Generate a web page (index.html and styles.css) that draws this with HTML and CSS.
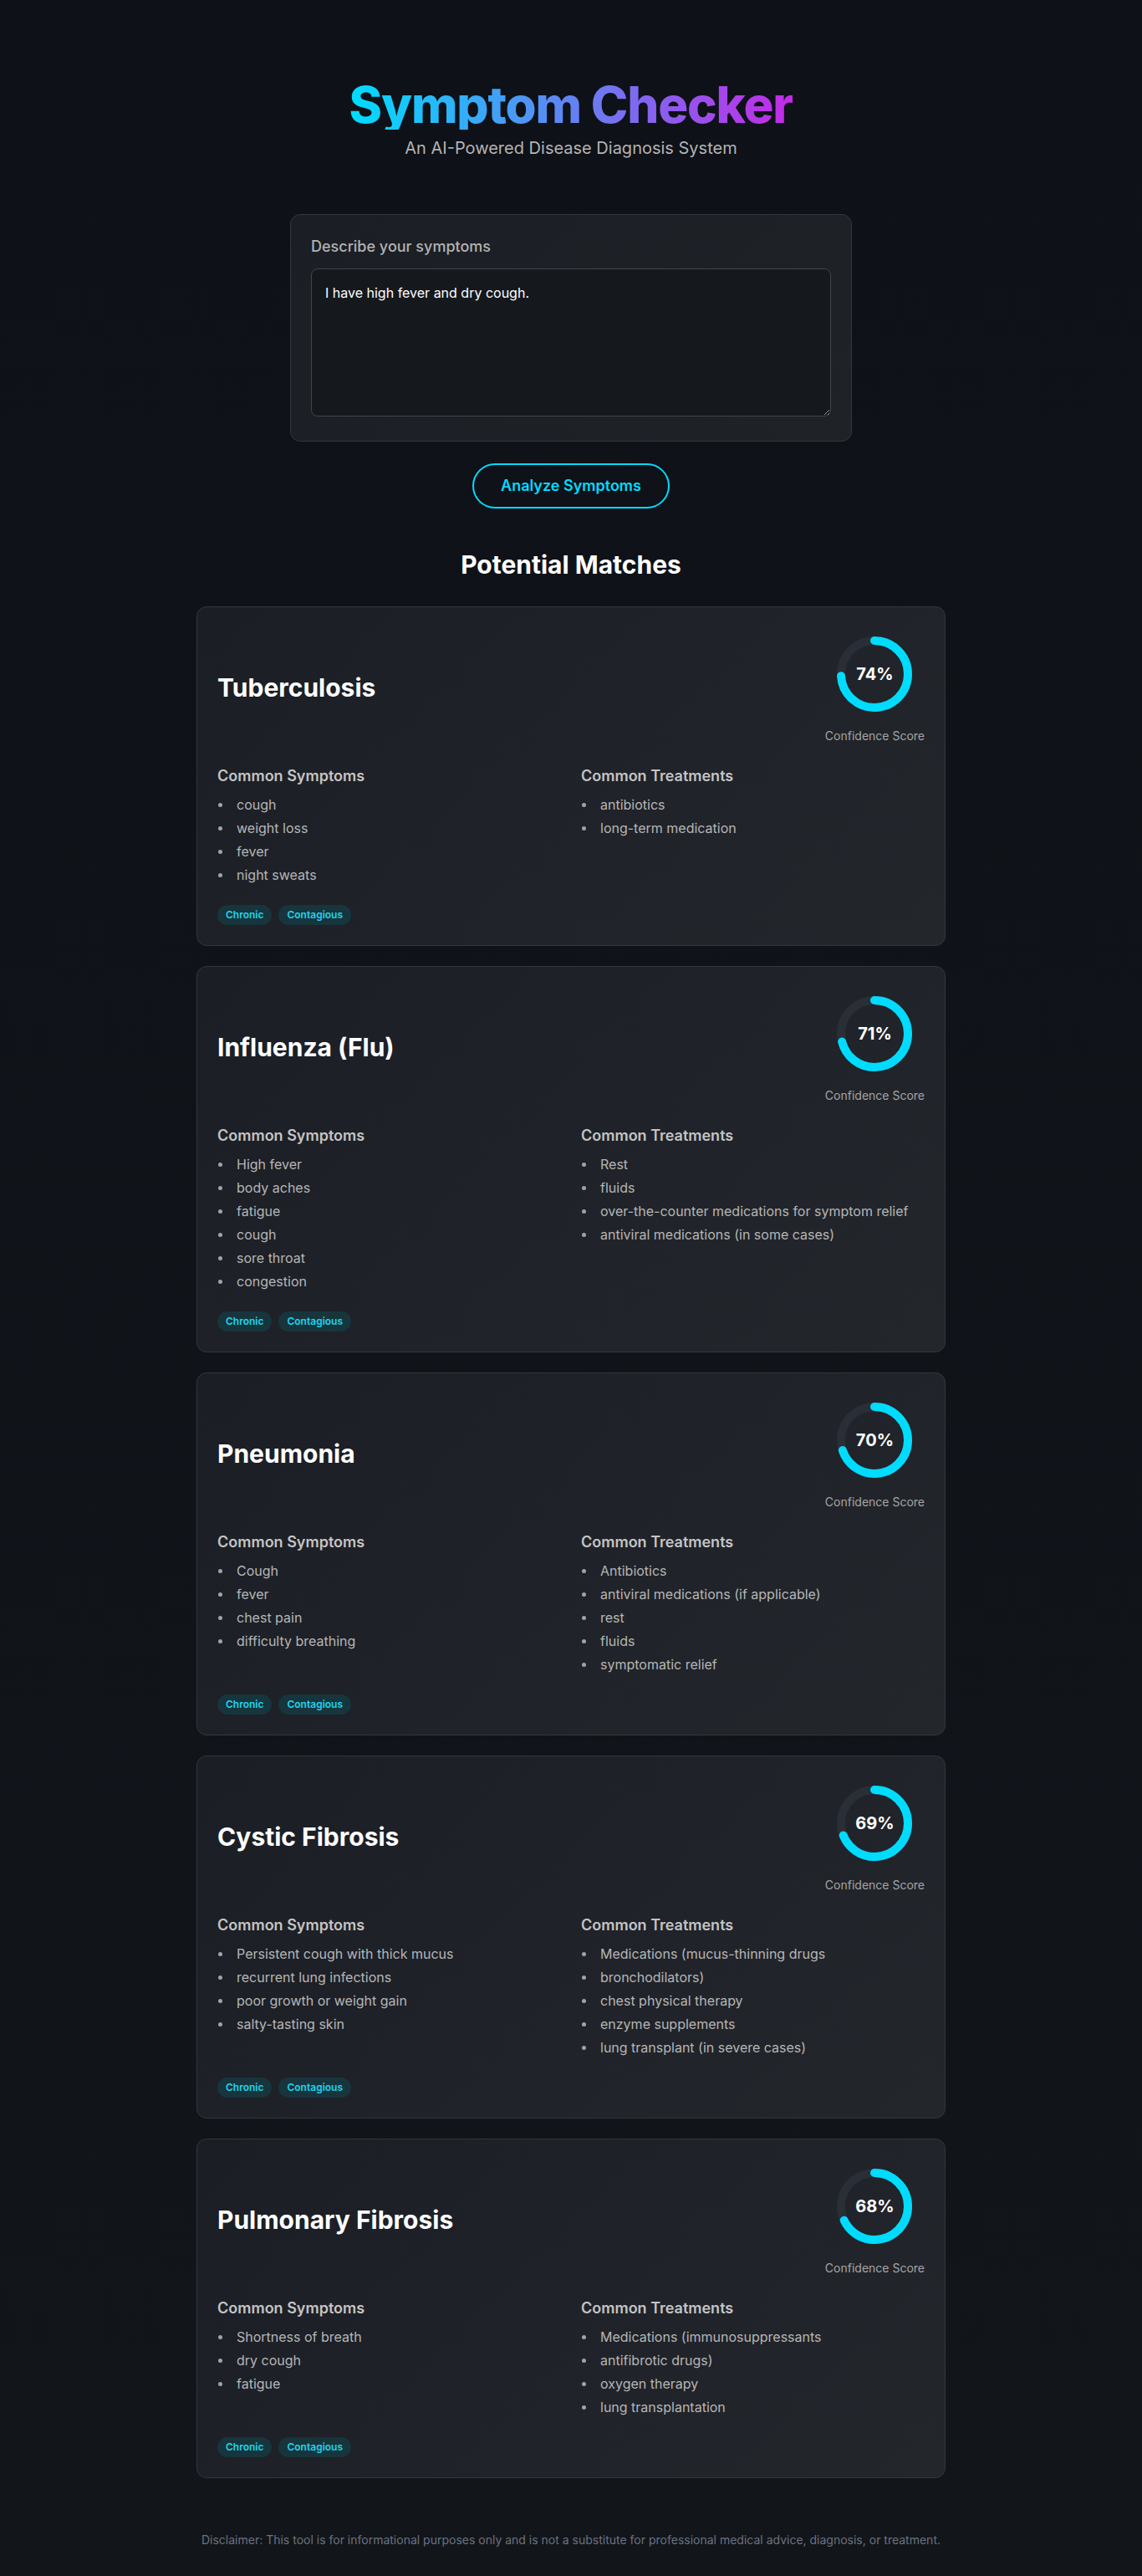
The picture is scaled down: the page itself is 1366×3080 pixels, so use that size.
FILE: index.html
```html
<!DOCTYPE html>
<html lang="en">
<head>
<meta charset="utf-8">
<title>Symptom Checker</title>
<link rel="stylesheet" href="styles.css">
</head>
<body>
<main class="page">
  <header class="hero">
    <h1 class="hero-title">Symptom Checker</h1>
    <p class="hero-sub">An AI-Powered Disease Diagnosis System</p>
  </header>

  <section class="input-card">
    <label class="input-label" for="symptoms">Describe your symptoms</label>
    <textarea id="symptoms" class="input-area">I have high fever and dry cough.</textarea>
  </section>

  <div class="action-row">
    <button class="analyze-btn">Analyze Symptoms</button>
  </div>

  <h2 class="results-title">Potential Matches</h2>

  <div class="results">
    <article class="card">
      <div class="card-head">
        <h3 class="card-title">Tuberculosis</h3>
        <div class="score">
          <div class="ring">
            <svg class="ring-svg" width="96" height="96" viewBox="0 0 96 96"><circle class="ring-track" cx="48" cy="48" r="40"/><circle class="ring-bar" cx="48" cy="48" r="40" stroke-dasharray="251.33" stroke-dashoffset="65.35"/></svg>
            <span class="ring-value">74%</span>
          </div>
          <span class="score-label">Confidence Score</span>
        </div>
      </div>
      <div class="card-grid">
        <div>
          <h4 class="col-title">Common Symptoms</h4>
          <ul class="items"><li>cough</li><li>weight loss</li><li>fever</li><li>night sweats</li></ul>
        </div>
        <div>
          <h4 class="col-title">Common Treatments</h4>
          <ul class="items"><li>antibiotics</li><li>long-term medication</li></ul>
        </div>
      </div>
      <div class="tags"><span class="tag">Chronic</span><span class="tag">Contagious</span></div>
    </article>

    <article class="card">
      <div class="card-head">
        <h3 class="card-title">Influenza (Flu)</h3>
        <div class="score">
          <div class="ring">
            <svg class="ring-svg" width="96" height="96" viewBox="0 0 96 96"><circle class="ring-track" cx="48" cy="48" r="40"/><circle class="ring-bar" cx="48" cy="48" r="40" stroke-dasharray="251.33" stroke-dashoffset="72.88"/></svg>
            <span class="ring-value">71%</span>
          </div>
          <span class="score-label">Confidence Score</span>
        </div>
      </div>
      <div class="card-grid">
        <div>
          <h4 class="col-title">Common Symptoms</h4>
          <ul class="items"><li>High fever</li><li>body aches</li><li>fatigue</li><li>cough</li><li>sore throat</li><li>congestion</li></ul>
        </div>
        <div>
          <h4 class="col-title">Common Treatments</h4>
          <ul class="items"><li>Rest</li><li>fluids</li><li>over-the-counter medications for symptom relief</li><li>antiviral medications (in some cases)</li></ul>
        </div>
      </div>
      <div class="tags"><span class="tag">Chronic</span><span class="tag">Contagious</span></div>
    </article>

    <article class="card">
      <div class="card-head">
        <h3 class="card-title">Pneumonia</h3>
        <div class="score">
          <div class="ring">
            <svg class="ring-svg" width="96" height="96" viewBox="0 0 96 96"><circle class="ring-track" cx="48" cy="48" r="40"/><circle class="ring-bar" cx="48" cy="48" r="40" stroke-dasharray="251.33" stroke-dashoffset="75.40"/></svg>
            <span class="ring-value">70%</span>
          </div>
          <span class="score-label">Confidence Score</span>
        </div>
      </div>
      <div class="card-grid">
        <div>
          <h4 class="col-title">Common Symptoms</h4>
          <ul class="items"><li>Cough</li><li>fever</li><li>chest pain</li><li>difficulty breathing</li></ul>
        </div>
        <div>
          <h4 class="col-title">Common Treatments</h4>
          <ul class="items"><li>Antibiotics</li><li>antiviral medications (if applicable)</li><li>rest</li><li>fluids</li><li>symptomatic relief</li></ul>
        </div>
      </div>
      <div class="tags"><span class="tag">Chronic</span><span class="tag">Contagious</span></div>
    </article>

    <article class="card">
      <div class="card-head">
        <h3 class="card-title">Cystic Fibrosis</h3>
        <div class="score">
          <div class="ring">
            <svg class="ring-svg" width="96" height="96" viewBox="0 0 96 96"><circle class="ring-track" cx="48" cy="48" r="40"/><circle class="ring-bar" cx="48" cy="48" r="40" stroke-dasharray="251.33" stroke-dashoffset="77.91"/></svg>
            <span class="ring-value">69%</span>
          </div>
          <span class="score-label">Confidence Score</span>
        </div>
      </div>
      <div class="card-grid">
        <div>
          <h4 class="col-title">Common Symptoms</h4>
          <ul class="items"><li>Persistent cough with thick mucus</li><li>recurrent lung infections</li><li>poor growth or weight gain</li><li>salty-tasting skin</li></ul>
        </div>
        <div>
          <h4 class="col-title">Common Treatments</h4>
          <ul class="items"><li>Medications (mucus-thinning drugs</li><li>bronchodilators)</li><li>chest physical therapy</li><li>enzyme supplements</li><li>lung transplant (in severe cases)</li></ul>
        </div>
      </div>
      <div class="tags"><span class="tag">Chronic</span><span class="tag">Contagious</span></div>
    </article>

    <article class="card">
      <div class="card-head">
        <h3 class="card-title">Pulmonary Fibrosis</h3>
        <div class="score">
          <div class="ring">
            <svg class="ring-svg" width="96" height="96" viewBox="0 0 96 96"><circle class="ring-track" cx="48" cy="48" r="40"/><circle class="ring-bar" cx="48" cy="48" r="40" stroke-dasharray="251.33" stroke-dashoffset="80.42"/></svg>
            <span class="ring-value">68%</span>
          </div>
          <span class="score-label">Confidence Score</span>
        </div>
      </div>
      <div class="card-grid">
        <div>
          <h4 class="col-title">Common Symptoms</h4>
          <ul class="items"><li>Shortness of breath</li><li>dry cough</li><li>fatigue</li></ul>
        </div>
        <div>
          <h4 class="col-title">Common Treatments</h4>
          <ul class="items"><li>Medications (immunosuppressants</li><li>antifibrotic drugs)</li><li>oxygen therapy</li><li>lung transplantation</li></ul>
        </div>
      </div>
      <div class="tags"><span class="tag">Chronic</span><span class="tag">Contagious</span></div>
    </article>
  </div>

  <footer class="disclaimer">Disclaimer: This tool is for informational purposes only and is not a substitute for professional medical advice, diagnosis, or treatment.</footer>
</main>
</body>
</html>
```
FILE: styles.css
```css
* { box-sizing: border-box; }
html { background: #0f1217; }
body {
  margin: 0;
  min-height: 100vh;
  background: linear-gradient(180deg, #0e1117 0%, #12151a 100%);
  font-family: Inter, "Noto Sans", "Liberation Sans", sans-serif;
  color: #e5e5e5;
}
.page {
  max-width: 896px;
  margin: 0 auto;
  padding: 95px 0 32px;
}
.hero { text-align: center; margin-bottom: 65px; }
.hero-title {
  margin: 0 0 8px;
  font-size: 60px;
  line-height: 60px;
  font-weight: 800;
  letter-spacing: -0.02em;
  display: inline-block;
  background: linear-gradient(90deg, #00dcff 0%, #c42ae6 100%);
  -webkit-background-clip: text;
  background-clip: text;
  color: transparent;
}
.hero-sub {
  margin: 0;
  font-size: 20px;
  line-height: 28px;
  color: #b4b4b4;
}
.input-card {
  max-width: 672px;
  margin: 0 auto;
  background: linear-gradient(135deg, #1b1e24 0%, #1f2227 100%);
  border: 1px solid #33363c;
  border-radius: 12px;
  padding: 24px 24px 29px;
}
.input-label {
  display: block;
  font-size: 18px;
  line-height: 28px;
  font-weight: 500;
  color: #b3b3b3;
  margin-bottom: 12px;
}
.input-area {
  display: block;
  width: 100%;
  height: 177px;
  background: #15181d;
  border: 1px solid #414449;
  border-radius: 8px;
  padding: 16px;
  font-family: Inter, "Noto Sans", sans-serif;
  font-size: 16px;
  line-height: 24px;
  color: #ffffff;
  resize: vertical;
  outline: none;
}
.action-row { display: flex; justify-content: center; margin-top: 26px; }
.analyze-btn {
  background: transparent;
  border: 2px solid #00dcff;
  border-radius: 9999px;
  color: #00dcff;
  font-family: Inter, "Noto Sans", sans-serif;
  font-size: 18px;
  line-height: 28px;
  font-weight: 600;
  padding: 11px 32px;
}
.results-title {
  margin: 49px 0 32px;
  text-align: center;
  font-size: 30px;
  line-height: 36px;
  font-weight: 700;
  color: #ffffff;
}
.results { display: flex; flex-direction: column; gap: 24px; }
.card {
  background: linear-gradient(135deg, #1b1e25 0%, #202329 60%, #23262b 100%);
  border: 1px solid #33363c;
  border-radius: 12px;
  padding: 24px;
}
.card-head {
  display: flex;
  justify-content: space-between;
  align-items: flex-start;
  height: 144px;
  margin-bottom: 20px;
}
.card-title {
  align-self: center;
  margin: 0;
  font-size: 30px;
  line-height: 36px;
  font-weight: 700;
  color: #ffffff;
}
.score {
  display: flex;
  flex-direction: column;
  align-items: center;
  padding-top: 8px;
}
.ring { display: grid; width: 96px; height: 96px; }
.ring-svg, .ring-value { grid-area: 1 / 1; }
.ring-svg { transform: rotate(-90deg); }
.ring-track { fill: none; stroke: #2a2e37; stroke-width: 10; }
.ring-bar { fill: none; stroke: #00dcff; stroke-width: 10; stroke-linecap: round; }
.ring-value {
  align-self: center;
  justify-self: center;
  font-size: 20px;
  line-height: 28px;
  font-weight: 700;
  color: #ffffff;
}
.score-label {
  margin-top: 16px;
  font-size: 14px;
  line-height: 20px;
  color: #a6a6a6;
}
.card-grid {
  display: grid;
  grid-template-columns: 1fr 1fr;
  gap: 24px;
}
.col-title {
  margin: 0 0 8px;
  font-size: 18px;
  line-height: 28px;
  font-weight: 600;
  color: #c4c4c4;
}
.items {
  list-style: none;
  margin: 0;
  padding: 0;
  display: flex;
  flex-direction: column;
  gap: 4px;
}
.items li {
  font-size: 16px;
  line-height: 24px;
  color: #b6b6b6;
}
.items li::before {
  content: "";
  display: inline-block;
  width: 5px;
  height: 5px;
  border-radius: 50%;
  background: #a3a3a3;
  margin: 0 17px 0 1px;
  vertical-align: middle;
  position: relative;
  top: -1px;
}
.tags { display: flex; gap: 8px; margin-top: 24px; }
.tag {
  font-size: 12px;
  line-height: 16px;
  font-weight: 600;
  color: #1fd6f0;
  background: #17353c;
  border-radius: 9999px;
  padding: 4px 10px;
}
.disclaimer {
  margin-top: 64px;
  text-align: center;
  font-size: 14px;
  line-height: 20px;
  color: #6b7280;
}
```
